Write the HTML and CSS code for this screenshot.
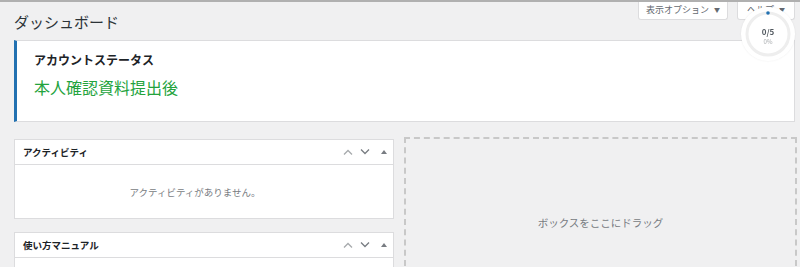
FILE: index.html
```html
<!DOCTYPE html>
<html lang="ja">
<head>
    <meta charset="UTF-8">
    <title>ダッシュボード</title>
    <link rel="stylesheet" href="styles.css">
</head>
<body>
    <div class="wrap">
        <div class="head">
            <h1>ダッシュボード</h1>
            <div class="meta-links">
                <button class="meta-btn options">表示オプション <span class="arrow">▼</span></button>
                <button class="meta-btn help">ヘルプ <span class="arrow">▼</span></button>
            </div>
        </div>

        <div class="status">
            <h3>アカウントステータス</h3>
            <p class="status-value">本人確認資料提出後</p>
        </div>

        <div class="widgets">
            <div class="col">
                <div class="postbox">
                    <div class="postbox-head">
                        <h2>アクティビティ</h2>
                        <div class="handles">
                            <svg class="up" width="10" height="6" viewBox="0 0 10 6"><path d="M1 5.5 L5 1.5 L9 5.5" fill="none" stroke="currentColor" stroke-width="1.3"/></svg>
                            <svg class="down" width="10" height="6" viewBox="0 0 10 6"><path d="M1 0.5 L5 4.5 L9 0.5" fill="none" stroke="currentColor" stroke-width="1.3"/></svg>
                            <svg class="toggle" width="6" height="4" viewBox="0 0 6 4"><path d="M0 4 L3 0 L6 4 Z" fill="currentColor"/></svg>
                        </div>
                    </div>
                    <div class="postbox-body">
                        <p class="empty">アクティビティがありません。</p>
                    </div>
                </div>

                <div class="postbox">
                    <div class="postbox-head">
                        <h2>使い方マニュアル</h2>
                        <div class="handles">
                            <svg class="up" width="10" height="6" viewBox="0 0 10 6"><path d="M1 5.5 L5 1.5 L9 5.5" fill="none" stroke="currentColor" stroke-width="1.3"/></svg>
                            <svg class="down" width="10" height="6" viewBox="0 0 10 6"><path d="M1 0.5 L5 4.5 L9 0.5" fill="none" stroke="currentColor" stroke-width="1.3"/></svg>
                            <svg class="toggle" width="6" height="4" viewBox="0 0 6 4"><path d="M0 4 L3 0 L6 4 Z" fill="currentColor"/></svg>
                        </div>
                    </div>
                    <div class="postbox-body"></div>
                </div>
            </div>

            <div class="drop">
                <span>ボックスをここにドラッグ</span>
            </div>
        </div>
    </div>

    <div class="progress">
        <svg class="ring" width="54" height="54" viewBox="0 0 54 54">
            <circle cx="27" cy="27" r="21" fill="none" stroke="#eeeeee" stroke-width="3"/>
            <circle cx="27" cy="6" r="1.8" fill="#2271b1"/>
        </svg>
        <div class="count">0/5</div>
        <div class="percent">0%</div>
    </div>
</body>
</html>
```

FILE: styles.css
```css
body {
    margin: 0;
    background: #f0f0f1;
    border-top: 2px solid #b0b0b0;
    font-family: "Noto Sans CJK JP", "Noto Sans", sans-serif;
    color: #1d2327;
    height: 265px;
    overflow: hidden;
}
.wrap {
    padding: 0 5px 0 14px;
}
.head {
    display: flex;
    justify-content: space-between;
    align-items: flex-start;
}
h1 {
    margin: 0;
    padding-top: 9px;
    font-size: 15px;
    line-height: 22px;
    font-weight: 400;
    color: #2c3338;
}
.meta-links {
    display: flex;
    gap: 9px;
    margin-top: -2px;
}
.meta-btn {
    height: 20px;
    padding: 0;
    background: #fff;
    border: 1px solid #dcdcde;
    border-top: none;
    border-radius: 0 0 3px 3px;
    font-family: inherit;
    font-size: 9px;
    color: #646970;
    line-height: 19px;
    white-space: nowrap;
    text-align: center;
}
.options {
    width: 90px;
}
.help {
    width: 58px;
}
.arrow {
    font-size: 6px;
    margin-left: 3px;
    vertical-align: 1px;
}
.status {
    margin-top: 7px;
    box-sizing: border-box;
    height: 82px;
    background: #fff;
    border: 1px solid #dcdcde;
    border-left: 3px solid #2271b1;
    padding: 11px 17px 0;
}
.status h3 {
    margin: 0;
    font-size: 12px;
    line-height: 16px;
    font-weight: 700;
}
.status-value {
    margin: 8px 0 0;
    font-size: 16px;
    line-height: 22px;
    color: #23a33d;
}
.widgets {
    display: flex;
    gap: 10px;
    margin-top: 15px;
    margin-right: -2px;
}
.col {
    width: 380px;
    padding-top: 2px;
}
.postbox {
    background: #fff;
    border: 1px solid #dcdcde;
    margin-bottom: 13px;
}
.postbox-head {
    display: flex;
    align-items: center;
    justify-content: space-between;
    height: 24px;
    padding: 0 6px 0 8px;
    border-bottom: 1px solid #dcdcde;
}
.postbox-head h2 {
    margin: 0;
    font-size: 9.5px;
    font-weight: 700;
    color: #1d2327;
}
.handles {
    display: flex;
    align-items: center;
    gap: 7px;
}
.handles .up {
    color: #a7aaad;
}
.handles .down {
    color: #787c82;
}
.handles .toggle {
    color: #787c82;
    margin-left: 4px;
}
.postbox-body {
    height: 53px;
    display: flex;
    align-items: center;
    justify-content: center;
    padding-right: 18px;
}
.empty {
    margin: 0;
    font-size: 9.5px;
    color: #787c82;
}
.drop {
    flex: 1;
    height: 166px;
    border: 2px dashed #c8c8c8;
    display: flex;
    align-items: center;
    justify-content: center;
    font-size: 10.5px;
    color: #787c82;
}
.progress {
    position: fixed;
    left: 741px;
    top: 7px;
    width: 54px;
    height: 54px;
    border-radius: 50%;
    background: #fff;
    box-shadow: 0 0 2px rgba(0, 0, 0, 0.08);
    text-align: center;
}
.ring {
    position: absolute;
    left: 0;
    top: 0;
}
.count {
    position: relative;
    padding-top: 19px;
    font-size: 8px;
    line-height: 11px;
    font-weight: 700;
    color: #50575e;
}
.percent {
    position: relative;
    margin-top: 1px;
    font-size: 6px;
    line-height: 8px;
    color: #a7aaad;
}
```
